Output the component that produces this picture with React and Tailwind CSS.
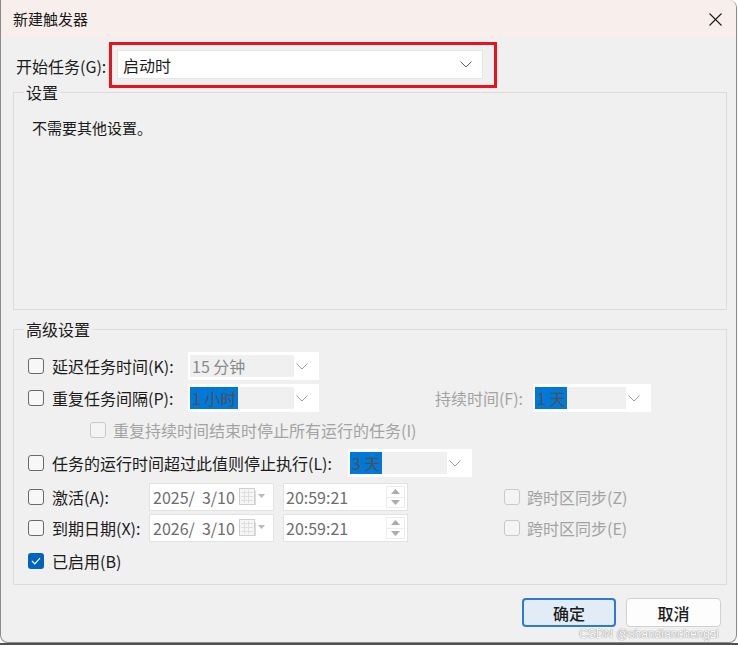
import React from "react";

function Chevron({ className = "", color = "#9a9a9a", w = 12, h = 7 }) {
  return (
    <svg width={w} height={h} viewBox="0 0 12 7" className={className}>
      <polyline points="0.5,0.5 6,6 11.5,0.5" fill="none" stroke={color} strokeWidth="1" />
    </svg>
  );
}

function Check({ checked, disabled }) {
  if (checked) {
    return (
      <div className="w-4 h-4 rounded-[3px] bg-[#0063c0] flex items-center justify-center shrink-0">
        <svg width="10" height="8" viewBox="0 0 10 8">
          <polyline points="1,4 3.8,6.8 9,1.2" fill="none" stroke="#ffffff" strokeWidth="1.2" />
        </svg>
      </div>
    );
  }
  if (disabled) {
    return <div className="w-4 h-4 rounded-[3px] border border-[#c9c9c9] bg-[#f4f4f4] shrink-0" />;
  }
  return <div className="w-4 h-4 rounded-[3px] border border-[#6a6a6a] bg-[#f7f7f7] shrink-0" />;
}

function Combo({ value, highlight, w, inner }) {
  return (
    <div className="bg-white h-[28px] flex items-center pl-[2px] pr-[11px] shrink-0" style={{ width: w }}>
      <div className="bg-[#f0f0f0] h-[22px] flex items-center" style={{ width: inner }}>
        {highlight ? (
          <span className="bg-[#0078d7] text-[#505050] pl-[2px] pr-[2px] leading-[22px]">{value}</span>
        ) : (
          <span className="text-[#8a8a8a] pl-[2px] leading-[22px]">{value}</span>
        )}
      </div>
      <div className="flex-1" />
      <Chevron />
    </div>
  );
}

function CalIcon() {
  return (
    <svg width="26" height="18" viewBox="0 0 26 18">
      <rect x="0.5" y="0.5" width="15" height="16" fill="#f6f6f6" stroke="#cfcfcf" />
      <line x1="2" y1="4.5" x2="14" y2="4.5" stroke="#dedede" />
      <line x1="2" y1="8.5" x2="14" y2="8.5" stroke="#dedede" />
      <line x1="2" y1="12.5" x2="14" y2="12.5" stroke="#dedede" />
      <line x1="5.5" y1="2" x2="5.5" y2="15" stroke="#dedede" />
      <line x1="9.5" y1="2" x2="9.5" y2="15" stroke="#dedede" />
      <line x1="16.5" y1="3" x2="16.5" y2="17" stroke="#dcdcdc" />
      <polygon points="19,6 26,6 22.5,10" fill="#b9b9b9" />
    </svg>
  );
}

function DateBox({ value }) {
  return (
    <div className="w-[125px] h-[28px] bg-white border border-[#e2e2e2] flex items-center pl-[3px] pr-[8px] shrink-0">
      <span className="text-[#6d6d6d] whitespace-pre">{value}</span>
      <div className="flex-1" />
      <CalIcon />
    </div>
  );
}

function TimeBox({ value }) {
  return (
    <div className="w-[125px] h-[28px] bg-white border border-[#e2e2e2] flex items-center pl-[2px] pr-[2px]">
      <span className="text-[#6d6d6d]">{value}</span>
      <div className="flex-1" />
      <div className="flex flex-col w-[19px] h-[22px]">
        <div className="flex-1 border border-[#ececec] flex items-center justify-center">
          <svg width="9" height="5" viewBox="0 0 9 5"><polygon points="0,5 9,5 4.5,0" fill="#ababab" /></svg>
        </div>
        <div className="flex-1 border border-t-0 border-[#ececec] flex items-center justify-center">
          <svg width="9" height="5" viewBox="0 0 9 5"><polygon points="0,0 9,0 4.5,5" fill="#ababab" /></svg>
        </div>
      </div>
    </div>
  );
}

export default function App() {
  return (
    <div className="w-[738px] h-[645px] bg-white font-['Noto_Sans_CJK_SC',sans-serif] text-[16px] text-[#1b1b1b] overflow-hidden">
      <div className="relative w-[737px] h-[643px] bg-[#f0f0f0] border-l border-r border-b border-[#8a8a8a] rounded-tr-[8px] rounded-b-[8px] overflow-hidden">
        {/* Title bar */}
        <div className="h-[38px] bg-[#f8efec] flex items-center justify-between pl-[12px] pr-[14px]">
          <span className="text-[15px] leading-[20px] text-[#1a1a1a]">新建触发器</span>
          <svg width="13" height="13" viewBox="0 0 13 13">
            <line x1="0.5" y1="0.5" x2="12.5" y2="12.5" stroke="#1a1a1a" strokeWidth="1.1" />
            <line x1="12.5" y1="0.5" x2="0.5" y2="12.5" stroke="#1a1a1a" strokeWidth="1.1" />
          </svg>
        </div>

        {/* Start task row */}
        <div className="flex items-center mt-[4px] pl-[15px]">
          <span className="w-[93px] leading-[20px] mt-[2px]">开始任务(G):</span>
          <div className="w-[388px] h-[46px] border-[3px] border-[#e8131c] pl-[5px] pt-[5px]">
            <div className="w-[366px] h-[29px] bg-white border border-[#e6e6e6] flex items-center pl-[5px] pr-[10px]">
              <span className="leading-[20px]">启动时</span>
              <div className="flex-1" />
              <Chevron color="#5a5a5a" w={12} h={7} />
            </div>
          </div>
        </div>

        {/* Settings group */}
        <fieldset className="ml-[12px] w-[714px] h-[225px] mt-[-3px] border border-[#dcdcdc] px-[0px]">
          <legend className="ml-[10px] px-[2px] leading-[14px]">设置</legend>
          <div className="pl-[18px] pt-[20px] text-[15px] leading-[18px]">不需要其他设置。</div>
        </fieldset>

        {/* Advanced group */}
        <fieldset className="ml-[12px] w-[714px] h-[263px] mt-[12px] border border-[#dcdcdc]">
          <legend className="ml-[10px] px-[2px] leading-[14px]">高级设置</legend>
          <div className="pl-[14px] pt-[16px] leading-[20px]">
            {/* row 1 */}
            <div className="flex items-center h-[28px]">
              <Check />
              <span className="ml-[8px] w-[136px] shrink-0">延迟任务时间(K):</span>
              <Combo value="15 分钟" w={131} inner={104} />
            </div>
            {/* row 2 */}
            <div className="flex items-center h-[28px] mt-[4px]">
              <Check />
              <span className="ml-[8px] w-[136px] shrink-0">重复任务间隔(P):</span>
              <Combo value="1 小时" highlight w={131} inner={104} />
              <span className="w-[214px] shrink-0 text-right pr-[10px] text-[#a3a3a3]">持续时间(F):</span>
              <Combo value="1 天" highlight w={118} inner={91} />
            </div>
            {/* row 3 */}
            <div className="flex items-center h-[36px] pl-[62px]">
              <Check disabled />
              <span className="ml-[7px] text-[#a3a3a3]">重复持续时间结束时停止所有运行的任务(I)</span>
            </div>
            {/* row 4 */}
            <div className="flex items-center h-[28px] mt-[1px]">
              <Check />
              <span className="ml-[8px] w-[296px] shrink-0">任务的运行时间超过此值则停止执行(L):</span>
              <Combo value="3 天" highlight w={124} inner={97} />
            </div>
            {/* row 5 */}
            <div className="flex items-center h-[28px] mt-[6px]">
              <Check />
              <span className="ml-[8px] w-[97px] shrink-0">激活(A):</span>
              <DateBox value="2025/  3/10" />
              <div className="ml-[9px]"><TimeBox value="20:59:21" /></div>
              <div className="ml-[96px] flex items-center">
                <Check disabled />
                <span className="ml-[7px] text-[#a3a3a3]">跨时区同步(Z)</span>
              </div>
            </div>
            {/* row 6 */}
            <div className="flex items-center h-[28px] mt-[3px]">
              <Check />
              <span className="ml-[8px] w-[97px] shrink-0">到期日期(X):</span>
              <DateBox value="2026/  3/10" />
              <div className="ml-[9px]"><TimeBox value="20:59:21" /></div>
              <div className="ml-[96px] flex items-center">
                <Check disabled />
                <span className="ml-[7px] text-[#a3a3a3]">跨时区同步(E)</span>
              </div>
            </div>
            {/* row 7 */}
            <div className="flex items-center h-[34px] mt-[2px]">
              <Check checked />
              <span className="ml-[8px]">已启用(B)</span>
            </div>
          </div>
        </fieldset>

        {/* Buttons */}
        <div className="flex justify-end gap-[10px] pr-[15px] mt-[13px]">
          <button className="w-[94px] h-[29px] rounded-[4px] border-2 border-[#2a7bd2] bg-[#e1ecf7] font-medium leading-[20px]">确定</button>
          <button className="w-[95px] h-[29px] rounded-[4px] border border-[#d0d0d0] bg-[#fdfdfd] font-medium leading-[20px]">取消</button>
        </div>

        <div className="absolute left-[578px] top-[628px] font-['Liberation_Sans',sans-serif] text-[12px] leading-[12px] text-white [text-shadow:0_0_1px_#8a8a8a,0_0_1px_#8a8a8a]">
          CSDN @shandianchengzi
        </div>
      </div>
      <div className="h-[2px] bg-[#505050]" />
    </div>
  );
}
